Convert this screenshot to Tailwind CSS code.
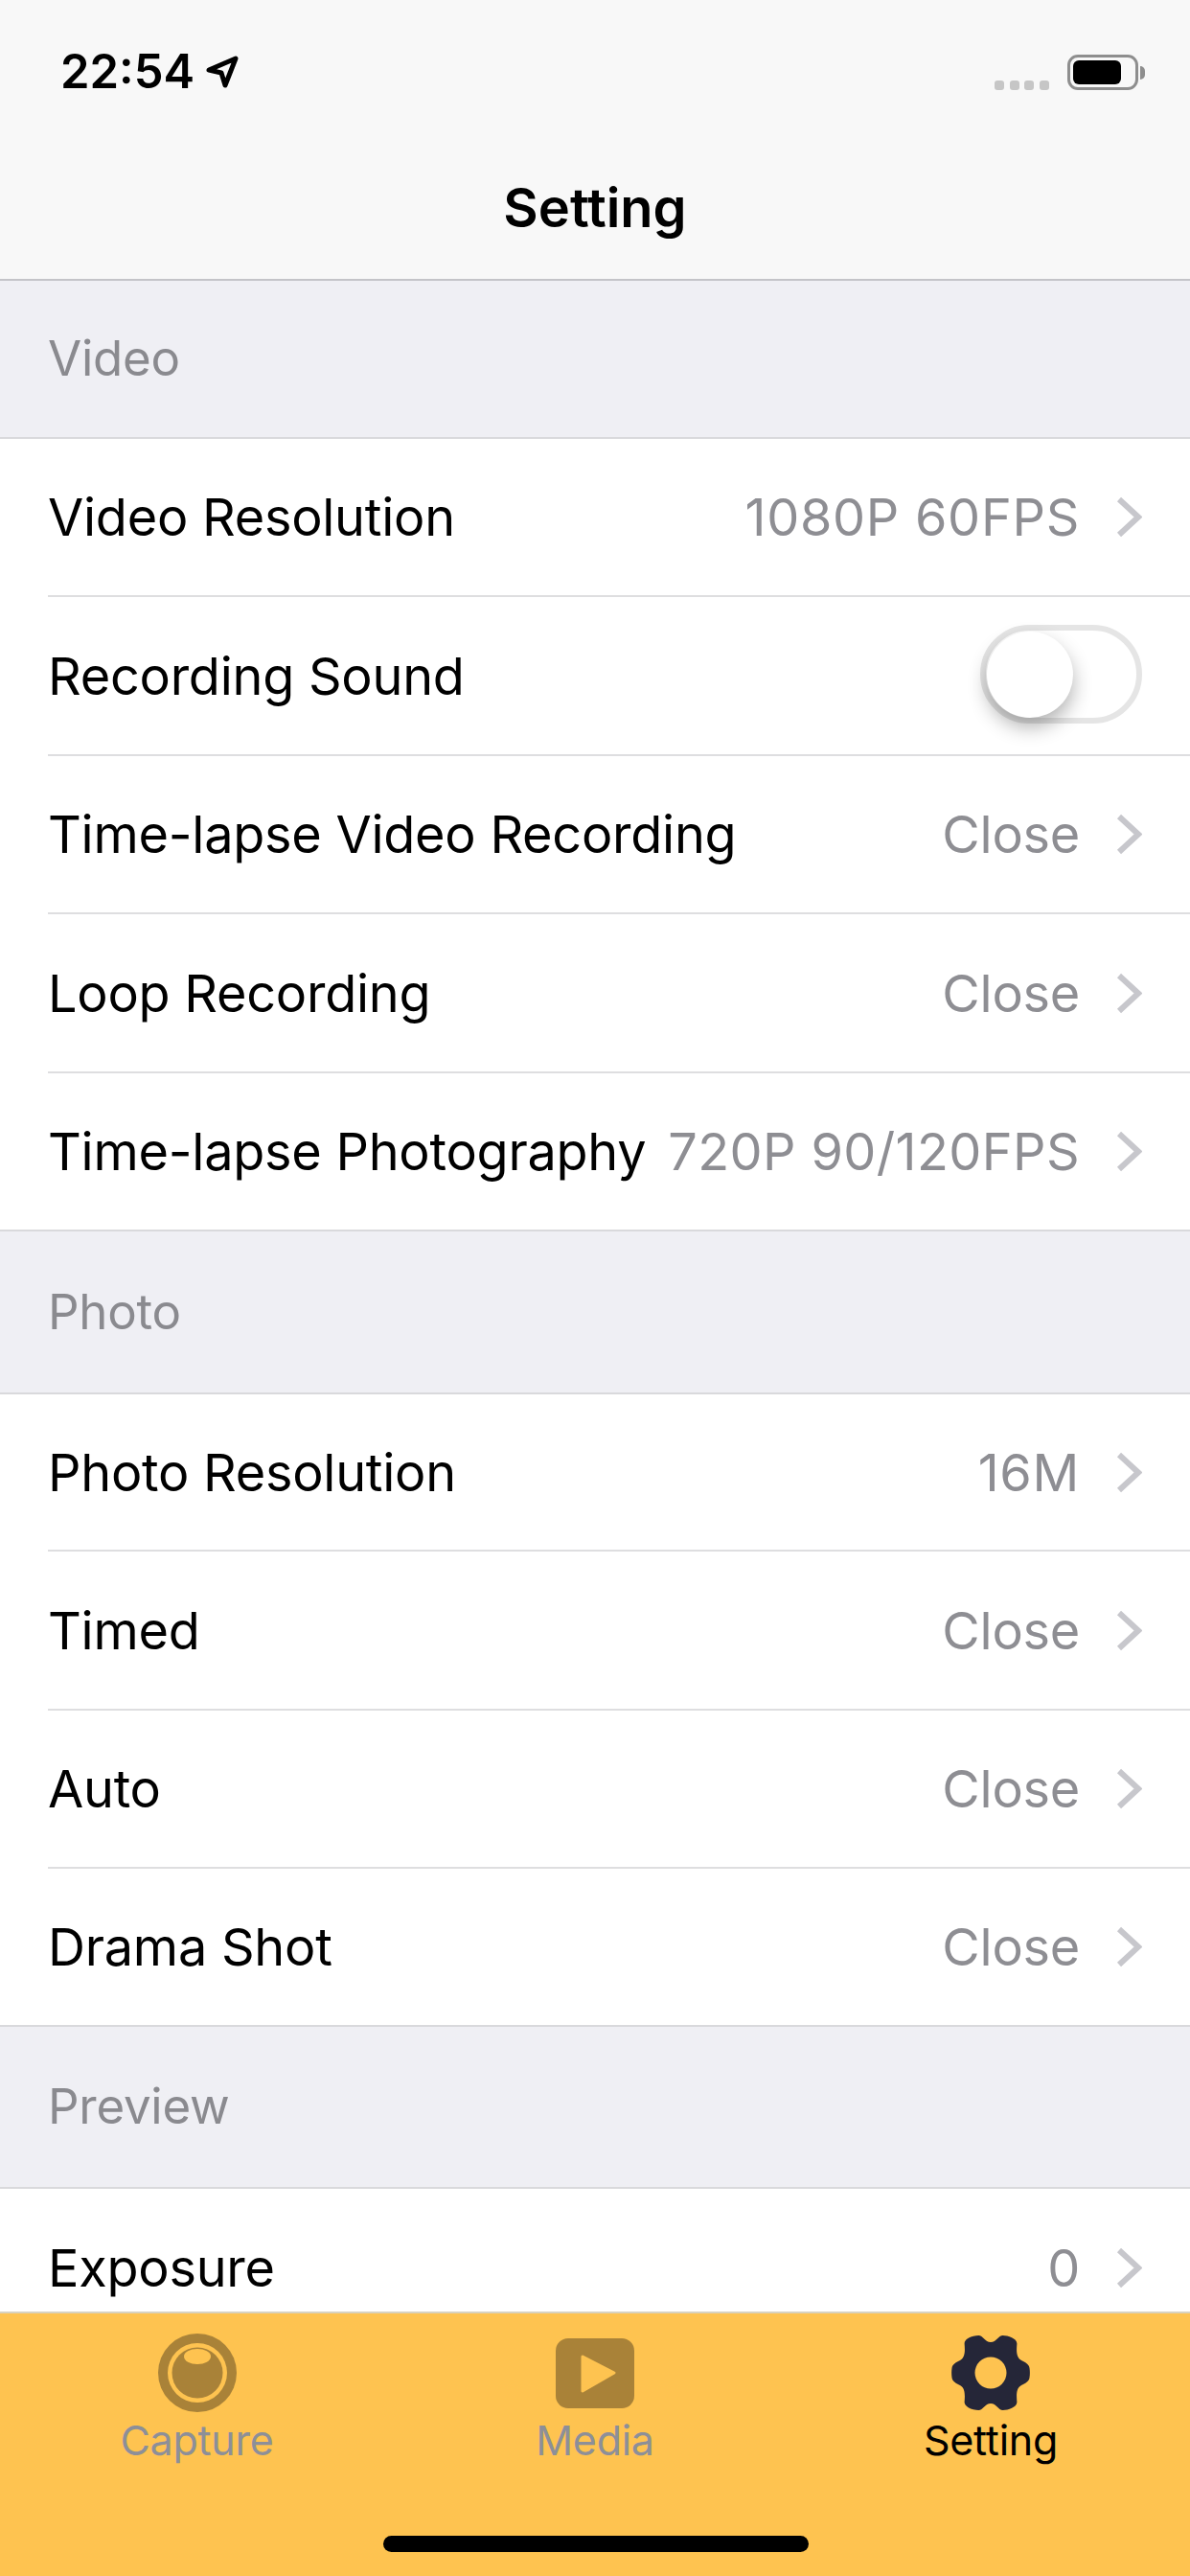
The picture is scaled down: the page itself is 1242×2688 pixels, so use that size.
<!DOCTYPE html>
<html lang="en">
<head>
    <meta charset="UTF-8">
    <meta name="viewport" content="width=device-width, initial-scale=1.0">
    <title>Setting</title>
    <script src="https://cdn.jsdelivr.net/npm/@tailwindcss/browser@4"></script>
</head>
<body class="bg-white">
<div class="w-[1242px] h-[2688px] flex flex-col overflow-hidden font-['Inter','Liberation_Sans',sans-serif] text-[54px] tracking-[-0.25px] text-black">

    <!-- status bar + nav -->
    <div class="relative h-[293px] shrink-0 bg-[#f8f8f8] border-b-2 border-[#c4c4c8]">
        <div class="absolute left-[63px] top-[47px] flex items-center gap-[11px]">
            <span class="text-[49px] leading-[56px] font-semibold tracking-normal">22:54</span>
            <svg width="36" height="36" viewBox="0 0 36 36"><path d="M4 16 L32 4 L21 32 L17 19 Z" fill="none" stroke="#000" stroke-width="5" stroke-linejoin="round"/></svg>
        </div>
        <div class="absolute left-[1038px] top-[84px] flex gap-[5.5px]">
            <div class="w-[10px] h-[10px] rounded-[3px] bg-[#c6c6c6]"></div>
            <div class="w-[10px] h-[10px] rounded-[3px] bg-[#c6c6c6]"></div>
            <div class="w-[10px] h-[10px] rounded-[3px] bg-[#c6c6c6]"></div>
            <div class="w-[10px] h-[10px] rounded-[3px] bg-[#c6c6c6]"></div>
        </div>
        <div class="absolute left-[1114px] top-[57px] w-[74px] h-[37px] rounded-[11px] border-[3px] border-[#8e8e8e] p-[3px] pr-[15px]">
            <div class="w-full h-full rounded-[6px] bg-black"></div>
        </div>
        <div class="absolute left-[1190px] top-[69px] w-[5px] h-[14px] rounded-r-[5px] bg-[#8e8e8e]"></div>
        <div class="absolute left-0 right-0 top-[185px] text-center text-[56px] leading-[64px] font-semibold tracking-normal">Setting</div>
    </div>

    <div class="flex-1 min-h-0 overflow-hidden">
        <!-- Video -->
        <div class="h-[165px] bg-[#efeff4] border-b-2 border-[#d9d9dc] pl-[50px] flex items-center text-[#8a8a8f] text-[51px]">Video</div>
        <div class="h-[165px] pl-[50px] bg-white">
            <div class="h-full flex items-center pr-[50px] border-b-2 border-[#dedee0]">
                <span>Video Resolution</span>
                <span class="ml-auto text-[#8e8e93] tracking-[0.7px]">1080P 60FPS</span>
                <svg class="ml-[38px]" width="27" height="43" viewBox="0 0 27 43"><path d="M3 3 L23 21.5 L3 40" fill="none" stroke="#c7c7cc" stroke-width="6"/></svg>
            </div>
        </div>
        <div class="h-[166px] pl-[50px] bg-white">
            <div class="h-full flex items-center pr-[50px] border-b-2 border-[#dedee0]">
                <span>Recording Sound</span>
                <div class="ml-auto mb-[3px] w-[169px] h-[103px] rounded-full border-[6px] border-[#e5e5e5] relative">
                    <div class="absolute left-[1px] top-[1px] w-[90px] h-[90px] rounded-full bg-white shadow-[0_10px_20px_rgba(0,0,0,0.3)]"></div>
                </div>
            </div>
        </div>
        <div class="h-[165px] pl-[50px] bg-white">
            <div class="h-full flex items-center pr-[50px] border-b-2 border-[#dedee0]">
                <span>Time-lapse Video Recording</span>
                <span class="ml-auto text-[#8e8e93]">Close</span>
                <svg class="ml-[38px]" width="27" height="43" viewBox="0 0 27 43"><path d="M3 3 L23 21.5 L3 40" fill="none" stroke="#c7c7cc" stroke-width="6"/></svg>
            </div>
        </div>
        <div class="h-[166px] pl-[50px] bg-white">
            <div class="h-full flex items-center pr-[50px] border-b-2 border-[#dedee0]">
                <span>Loop Recording</span>
                <span class="ml-auto text-[#8e8e93]">Close</span>
                <svg class="ml-[38px]" width="27" height="43" viewBox="0 0 27 43"><path d="M3 3 L23 21.5 L3 40" fill="none" stroke="#c7c7cc" stroke-width="6"/></svg>
            </div>
        </div>
        <div class="h-[165px] pl-[50px] bg-white flex items-center pr-[50px] border-b-2 border-[#d9d9dc]">
            <span>Time-lapse Photography</span>
            <span class="ml-auto text-[#8e8e93] tracking-[0.4px]">720P 90/120FPS</span>
            <svg class="ml-[38px]" width="27" height="43" viewBox="0 0 27 43"><path d="M3 3 L23 21.5 L3 40" fill="none" stroke="#c7c7cc" stroke-width="6"/></svg>
        </div>

        <!-- Photo -->
        <div class="h-[170px] bg-[#efeff4] border-b-2 border-[#d9d9dc] pl-[50px] flex items-center text-[#8a8a8f] text-[51px]">Photo</div>
        <div class="h-[164px] pl-[50px] bg-white">
            <div class="h-full flex items-center pr-[50px] border-b-2 border-[#dedee0]">
                <span>Photo Resolution</span>
                <span class="ml-auto text-[#8e8e93] tracking-[0.7px]">16M</span>
                <svg class="ml-[38px]" width="27" height="43" viewBox="0 0 27 43"><path d="M3 3 L23 21.5 L3 40" fill="none" stroke="#c7c7cc" stroke-width="6"/></svg>
            </div>
        </div>
        <div class="h-[166px] pl-[50px] bg-white">
            <div class="h-full flex items-center pr-[50px] border-b-2 border-[#dedee0]">
                <span>Timed</span>
                <span class="ml-auto text-[#8e8e93]">Close</span>
                <svg class="ml-[38px]" width="27" height="43" viewBox="0 0 27 43"><path d="M3 3 L23 21.5 L3 40" fill="none" stroke="#c7c7cc" stroke-width="6"/></svg>
            </div>
        </div>
        <div class="h-[165px] pl-[50px] bg-white">
            <div class="h-full flex items-center pr-[50px] border-b-2 border-[#dedee0]">
                <span>Auto</span>
                <span class="ml-auto text-[#8e8e93]">Close</span>
                <svg class="ml-[38px]" width="27" height="43" viewBox="0 0 27 43"><path d="M3 3 L23 21.5 L3 40" fill="none" stroke="#c7c7cc" stroke-width="6"/></svg>
            </div>
        </div>
        <div class="h-[165px] pl-[50px] bg-white flex items-center pr-[50px] border-b-2 border-[#d9d9dc]">
            <span>Drama Shot</span>
            <span class="ml-auto text-[#8e8e93]">Close</span>
            <svg class="ml-[38px]" width="27" height="43" viewBox="0 0 27 43"><path d="M3 3 L23 21.5 L3 40" fill="none" stroke="#c7c7cc" stroke-width="6"/></svg>
        </div>

        <!-- Preview -->
        <div class="h-[169px] bg-[#efeff4] border-b-2 border-[#d9d9dc] pl-[50px] flex items-center text-[#8a8a8f] text-[51px]">Preview</div>
        <div class="h-[165px] pl-[50px] bg-white">
            <div class="h-full flex items-center pr-[50px]">
                <span>Exposure</span>
                <span class="ml-auto text-[#8e8e93]">0</span>
                <svg class="ml-[38px]" width="27" height="43" viewBox="0 0 27 43"><path d="M3 3 L23 21.5 L3 40" fill="none" stroke="#c7c7cc" stroke-width="6"/></svg>
            </div>
        </div>
    </div>

    <!-- tab bar -->
    <div class="relative h-[276px] shrink-0 bg-[#fec350] border-t-2 border-[#d8d2c0]">
        <div class="grid grid-cols-3 pt-[20px]">
            <div class="flex flex-col items-center pr-[3px]">
                <svg width="84" height="84" viewBox="0 0 84 84">
                    <circle cx="42" cy="42" r="41" fill="#a98238"/>
                    <circle cx="42" cy="42" r="31" fill="#fec350"/>
                    <circle cx="42" cy="42" r="26.5" fill="#a98238"/>
                    <ellipse cx="42" cy="25" rx="14" ry="8" fill="#fec350"/>
                </svg>
                <span class="text-[43px] leading-[50px] mt-[3px] text-[#8d8f98]">Capture</span>
            </div>
            <div class="flex flex-col items-center">
                <svg width="84" height="84" viewBox="0 0 84 84">
                    <rect x="1" y="6" width="82" height="73" rx="13" fill="#a98238"/>
                    <path d="M29 25 L62 42 L29 61 Z" fill="#fec350" stroke="#fec350" stroke-width="3" stroke-linejoin="round"/>
                </svg>
                <span class="text-[43px] leading-[50px] mt-[3px] text-[#8d8f98]">Media</span>
            </div>
            <div class="flex flex-col items-center pr-[2px]">
                <svg width="84" height="84" viewBox="0 0 84 84">
                    <path fill="#252638" fill-rule="evenodd" d="M42 10 C48 10 50 3 54.7 3 C60 3 69.4 6 69.4 11.5 C69 17 68 26 74 29 C78 31 82 33 82.5 37 C83 40 83 44 82.5 47 C82 51 78 53 74 55 C68 58 69 67 69.4 72.5 C69.4 78 60 81 54.7 81 C50 81 48 74 42 74 C36 74 34 81 29.3 81 C24 81 14.6 78 14.6 72.5 C15 67 16 58 10 55 C6 53 2 51 1.5 47 C1 44 1 40 1.5 37 C2 33 6 31 10 29 C16 26 15 17 14.6 11.5 C14.6 6 24 3 29.3 3 C34 3 36 10 42 10 Z M42 25.5 A16.5 16.5 0 1 0 42 58.5 A16.5 16.5 0 1 0 42 25.5 Z"/>
                </svg>
                <span class="text-[43px] leading-[50px] mt-[3px] text-black">Setting</span>
            </div>
        </div>
        <div class="absolute left-[400px] top-[232px] w-[444px] h-[17px] rounded-full bg-black"></div>
    </div>
</div>
</body>
</html>
